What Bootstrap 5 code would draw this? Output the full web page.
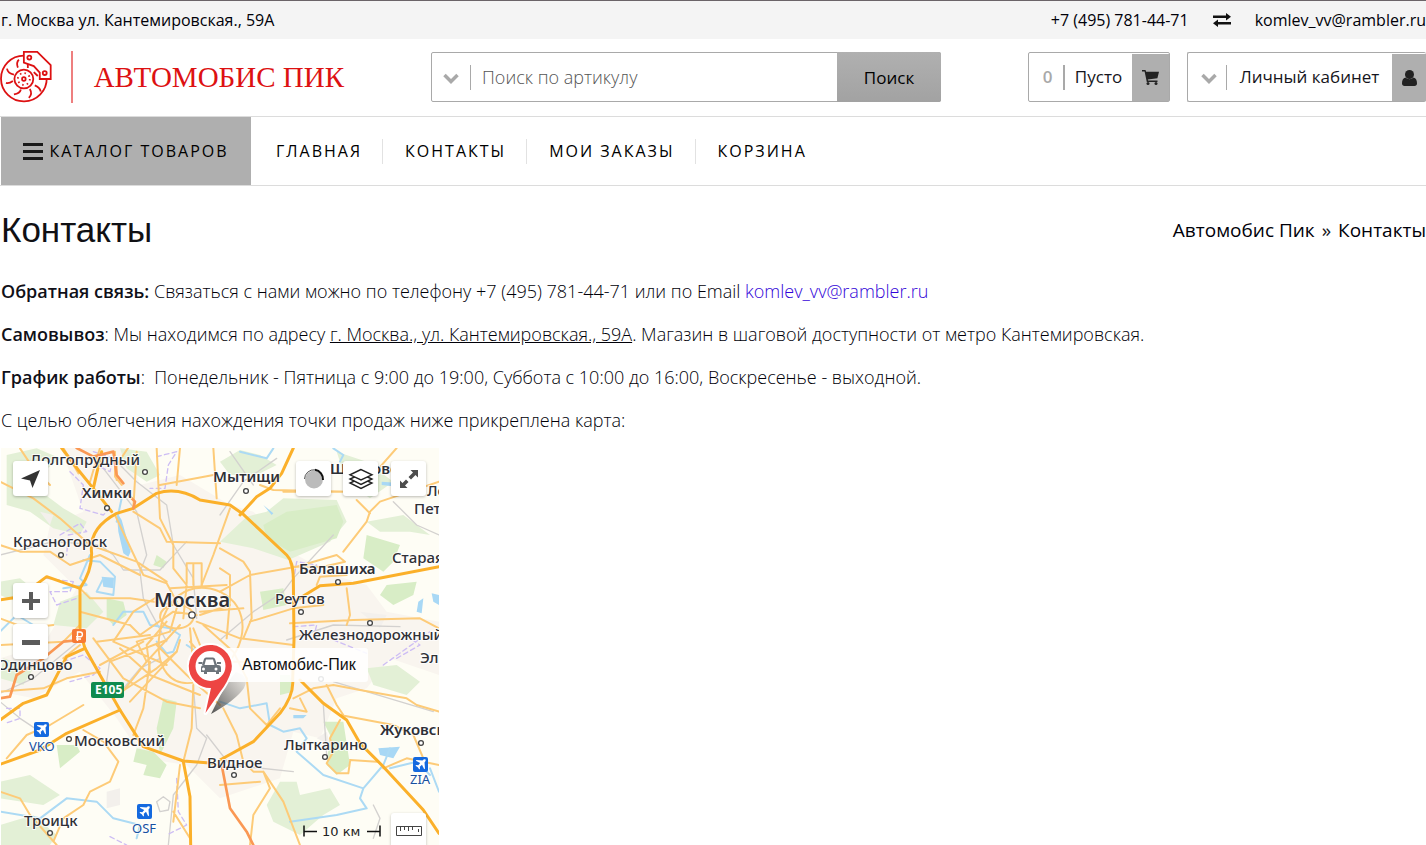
<!DOCTYPE html>
<html lang="ru">
<head>
<meta charset="utf-8">
<meta name="viewport" content="width=device-width, initial-scale=1">
<title>Контакты — Автомобис Пик</title>
<link href="https://cdn.jsdelivr.net/npm/bootstrap@5.3.0/dist/css/bootstrap.min.css" rel="stylesheet">
<style>
body{font-family:"Open Sans","Noto Sans",sans-serif;font-size:18px;line-height:25px;color:#000008;font-weight:300}
a{color:inherit;text-decoration:none}
.topbar{background:#f4f4f4;border-top:1px solid #6b6468;font-size:16px;line-height:38px;font-weight:400;padding-left:1px}
.site-head{min-height:77px;padding-bottom:1px}
.brand{color:#dd1112;font:29px "Liberation Serif",serif;width:344px}
.brand-name{margin-left:21px}
.brand-line{width:2px;height:52px;background:#ee7f7f;margin-left:19px}
.search{flex:0 1 510px;height:50px;border:1px solid #a9a9a9;border-radius:2px}
.search input{border:0;outline:0;min-width:0;font-size:18px;font-weight:300;padding:0 11px;background:none}
.search input::placeholder{color:#555;opacity:1}
.search-go{width:104px;border:0;margin:-1px;border-radius:0 2px 2px 0;background:linear-gradient(#b0b0b0,#a2a2a2);color:#000;font-size:17px}
.arrow{border:0;background:none;padding:0;width:38px}
.rule{width:1px;height:25px;background:#a9a9a9}
.rule2{width:2px}
.box{height:50px;border:1px solid #a9a9a9;border-radius:2px;font-size:17px;line-height:24px;font-weight:400;background:none;padding:0;color:#151520}
.basket{width:142px}
.account{width:239px;border-right:0}
.box-ico{width:37px;background:#afafaf;margin-top:1px}
.account .box-ico{width:34px}
.count{width:34px;color:#a9a9a9;padding-left:3px;font-weight:600}
.menu{border-top:1px solid #dcdcdc;border-bottom:1px solid #dcdcdc;padding-left:1px;height:70px;font-weight:500;font-size:16px;letter-spacing:2px;color:#000}
.catalog{background:#afafaf;border:0;width:250px;font-weight:500;letter-spacing:inherit;color:#000;padding:0}
.catalog svg{margin-right:6px}
.menu-links a{padding:0 20px 0 22px;line-height:25px;border-left:1px solid #e2e2e2}
.menu-links li:first-child a{border:0;padding-left:25px}
.page{padding-left:1px}
.page h1{font:400 35px/42px "Liberation Sans",Arial,sans-serif;color:#101014}
.page b{font-weight:600;color:#101018}
.title-row{padding:23px 0}
.crumbs{font-size:19px;font-weight:400}
.crumbs .breadcrumb-item+.breadcrumb-item::before{content:"»";color:#151520;padding-right:7px}
.crumbs .breadcrumb-item+.breadcrumb-item{padding-left:7px}
.texts{padding-top:5px}
.texts p{margin-bottom:18px}
.texts p:last-child{margin-bottom:15px}
.mail{color:#3204d8}
.map{width:438px;max-width:100%;overflow:hidden}
.map-btn{position:absolute;width:35px;height:35px;border:0;border-radius:3px;background:#fff;box-shadow:0 1px 3px #0004;padding:0;display:flex;align-items:center;justify-content:center}
.hw{stroke:#fbb02a;stroke-width:9}
.rd{stroke:#fdcb78;stroke-width:6}
.rail{stroke:#d3d1cf;stroke-width:4}
.wt{stroke:#acdaf4;stroke-width:6}
.lbl{font-family:"Noto Sans",sans-serif;font-size:15px;font-weight:500;fill:#2f3036;paint-order:stroke;stroke:#fffc;stroke-width:2px}
.bl{font-weight:600}
.city{font-size:20px}
.air{fill:#17509f;font-size:13px;font-weight:400}
</style>
</head>
<body>
<div class="topbar d-flex justify-content-between">
  <span>г. Москва ул. Кантемировская., 59А</span>
  <div class="d-flex align-items-center">
    <a href="tel:+74957814471">+7 (495) 781-44-71</a>
    <a href="#" class="d-flex px-4" aria-label="Сравнение"><svg width="18" height="14" viewBox="0 0 18 14" fill="#111"><path d="M0 2.500h13V0l5 3.800-5 3.700V5H0zM18 9H5V6.500L0 10.200 5 14v-2.500h13z"/></svg></a>
    <a href="mailto:komlev_vv@rambler.ru">komlev_vv@rambler.ru</a>
  </div>
</div>
<header class="site-head d-flex align-items-center justify-content-between">
  <a href="#" class="brand d-flex align-items-center">
    <svg width="52" height="52" viewBox="0 0 52 52" fill="none" stroke="#dd1112" stroke-width="1.800">
      <path d="M24 4.500A23 23 0 1 0 47 27"/><circle cx="24" cy="28" r="9.500"/><circle cx="24" cy="28" r="1.800"/>
      <circle cx="24" cy="28" r="6" stroke-dasharray="1.500 3.200"/>
      <path d="M24 .8h13.500L51 14v14H40V21.500L34 15 24 11.500z"/><circle cx="29.500" cy="6.500" r="2"/><circle cx="45" cy="22" r="2"/>
      <path d="M19 8.500q-3 3-1 8M7 17.500q1 5 7 6M6 32q3 1 7-2M14 43.500q6-1 7-5M29 47q4-4 1-9M41 40.500q-1-4-6-6"/>
      <path d="M28 13v4M34 21l4 4"/>
    </svg>
    <span class="brand-line"></span><span class="brand-name text-nowrap">АВТОМОБИС ПИК</span>
  </a>
  <form class="search d-flex align-items-center">
    <button type="button" class="arrow" aria-label="Тип поиска"><svg width="16" height="11" viewBox="0 0 16 11" fill="none" stroke="#a9a9a9" stroke-width="3.500"><path d="M1.500 2 8 8.500 14.500 2"/></svg></button>
    <span class="rule"></span>
    <input class="flex-grow-1" type="text" placeholder="Поиск по артикулу" aria-label="Поиск по артикулу">
    <button type="submit" class="search-go align-self-stretch">Поиск</button>
  </form>
  <div class="d-flex justify-content-between" style="gap:17px">
    <a href="#" class="box basket d-flex align-items-center">
      <b class="count text-center">0</b><span class="rule rule2"></span><span class="flex-grow-1 text-center">Пусто</span>
      <span class="box-ico align-self-stretch d-flex align-items-center justify-content-center"><svg width="17" height="15" viewBox="0 0 17 15" fill="#222"><path d="M0 0h3.500l.6 1.800H17l-1.600 6.500-9.600 1.100.3 1.200H15.500V12H4.800L2.600 1.500H0z"/><circle cx="6" cy="13.500" r="1.500"/><circle cx="14" cy="13.500" r="1.500"/></svg></span>
    </a>
    <button type="button" class="box account d-flex align-items-center">
      <span class="arrow ps-1"><svg width="16" height="11" viewBox="0 0 16 11" fill="none" stroke="#a9a9a9" stroke-width="3.500"><path d="M1.500 2 8 8.500 14.500 2"/></svg></span>
      <span class="rule"></span><span class="flex-grow-1 text-center text-nowrap">Личный кабинет</span>
      <span class="box-ico align-self-stretch d-flex align-items-center justify-content-center"><svg width="15" height="16" viewBox="0 0 15 16" fill="#222"><circle cx="7.500" cy="4.500" r="4.500"/><path d="M3.500 7.500C1 8 0 10.500 0 13.500 0 15 1 16 2.500 16h10c1.500 0 2.500-1 2.500-2.500 0-3-1-5.500-3.500-6a5.500 5.500 0 0 1-8 0z"/></svg></span>
    </button>
  </div>
</header>
<nav class="menu d-flex">
  <button type="button" class="catalog d-flex align-items-center justify-content-center"><svg width="20" height="17" viewBox="0 0 20 17" fill="#1a1a1a"><path d="M0 0h20v3H0zM0 7h20v3H0zM0 14h20v3H0z"/></svg>КАТАЛОГ ТОВАРОВ</button>
  <ul class="menu-links list-unstyled d-flex align-items-center m-0">
    <li><a class="d-block" href="#">ГЛАВНАЯ</a></li><li><a class="d-block" href="#">КОНТАКТЫ</a></li><li><a class="d-block" href="#">МОИ ЗАКАЗЫ</a></li><li><a class="d-block" href="#">КОРЗИНА</a></li>
  </ul>
</nav>
<main class="page">
  <div class="title-row d-flex justify-content-between align-items-center">
    <h1 class="m-0">Контакты</h1>
    <ol class="crumbs breadcrumb m-0"><li class="breadcrumb-item"><a href="#">Автомобис Пик</a></li><li class="breadcrumb-item">Контакты</li></ol>
  </div>
  <div class="texts">
    <p><b>Обратная связь:</b> Связаться с нами можно по телефону +7 (495) 781-44-71 или по Email <a class="mail" href="mailto:komlev_vv@rambler.ru">komlev_vv@rambler.ru</a></p>
    <p><b>Самовывоз</b>: Мы находимся по адресу <u>г. Москва., ул. Кантемировская., 59А</u>. Магазин в шаговой доступности от метро Кантемировская.</p>
    <p><b>График работы</b>:&nbsp; Понедельник - Пятница с 9:00 до 19:00, Суббота с 10:00 до 16:00, Воскресенье - выходной.</p>
    <p>С целью облегчения нахождения точки продаж ниже прикреплена карта:</p>
  </div>
  <div class="map position-relative">
    <svg class="d-block w-100" viewBox="1 448 438 397">
      <rect x="1" y="448" width="438" height="397" fill="#fefdf5"/>
      <g transform="translate(0 445) scale(.333333)" fill="none" stroke-linejoin="round" stroke-linecap="round">
        <path fill="#f9f5ef" d="M180 0 380 0 420 120 540 90 690 180 760 200 890 330 1000 390 1100 420 1160 500 1317 530V690L1170 640 1100 730 1010 760 960 880 880 860 840 1000 660 1060 560 960 430 940 350 820 240 680 100 760 0 740V640L130 600 230 430 130 330 150 240 250 200z"/>
        <path fill="#e3f0d6" d="M20 30 110 10 180 40 130 80 110 130 190 190 260 230 240 270 160 250 90 200 20 180zM360 10 440 20 480 90 440 110 380 70zM660 50 720 15 780 30 830 60 770 90 690 90zM660 290 740 215 800 200 850 160 1010 165 1040 230 990 290 865 345 760 310zM1010 20 1100 50 1180 110 1110 160 1040 110zM1100 230 1210 210 1290 270 1230 260 1140 260zM0 410 60 400 110 440 50 470 0 450zM180 470 260 440 310 500 260 550 160 540zM10 640 100 670 70 720 0 700zM0 1010 90 990 180 1050 130 1080 0 1060zM0 1140 100 1110 170 1170 150 1200 0 1200zM900 1050 990 1030 1020 1080 970 1110 900 1170 820 1130 800 1080 840 1010 890 1010zM1100 670 1190 660 1260 710 1220 750 1120 720z"/>
        <path fill="#d8edc6" d="M790 240 860 200 1010 180 1030 230 1010 280 870 320 800 280zM1100 270 1200 300 1180 350 1150 380 1090 340zM1160 420 1250 410 1240 450 1180 480 1140 450zM470 330 500 350 490 370 460 360zM320 460 370 470 380 510 340 540 320 520zM780 440 850 430 860 480 790 495zM840 690 870 690 880 740 840 750zM970 830 1030 830 1050 960 1010 990 980 960 990 870zM490 760 530 770 520 850 480 930 470 850zM410 910 460 920 500 960 480 1000 430 990 440 960 400 950zM170 900 230 900 240 920 180 970z"/>
        <path fill="#f3f0ec" d="M60 60 100 50 110 90 70 90zM120 200 160 210 150 240zM70 500 120 480 130 510zM320 1040 360 1030 360 1080 320 1090zM1080 500 1160 510 1140 550zM950 880 980 860 990 900z"/>
        <path fill="#a8d8f5" d="M350 200 365 225 392 320 385 335 370 325 355 260zM305 395 342 398 340 430 310 425zM790 180 820 205 815 210zM1145 110 1210 115 1190 125 1145 120zM1295 445 1317 450V480L1300 470zM1255 470 1270 460 1265 505 1250 500zM880 810 920 810 910 820 880 820zM1135 910 1200 905 1180 940 1140 930z"/>
        <g class="rail">
          <path d="M310 70 410 200 440 330 420 380 430 460 500 590M340 40 410 110 500 180 520 300 580 400 590 520M0 330 160 290 300 300 340 330 370 375 480 375 560 290M660 210 730 110 830 40M660 585 760 500 850 440 880 400 1000 270M1180 170 1250 240 1317 270M860 585 1000 540 1200 545M580 720 590 850 620 880 590 960 520 1050 505 1200M620 870 690 960 880 980M970 780 980 930M1000 710 1100 740 1300 800M0 745 100 700 240 585M0 770 60 820 120 860M330 640 320 710 370 730 420 670 480 640M470 1070 490 1055 510 1070 505 1095 480 1100zM1120 1080 1140 1120 1120 1180M690 20 760 120"/>
        </g>
        <g stroke="#cdbdf4" stroke-width="4" stroke-dasharray="14 10">
          <path d="M280 20 340 40 330 80 290 60M210 80 250 120 240 190 310 210 330 190M180 270 240 235 260 260 205 270 200 330M470 35 530 20 505 60 495 130 450 130M140 400 220 410 210 440 150 440 170 480 230 460M880 410 890 350 950 360 920 380M880 545 950 540 940 580M1190 640 1260 600 1230 580M190 650 250 630 300 670 280 690 210 710M20 790 60 790 60 820 15 835M1000 585 1100 625M530 1000 535 1100 560 1140 500 1170M330 1175 380 1200M1150 660 1290 560"/>
        </g>
        <g class="wt">
          <path d="M365 160 350 230M250 345 300 350 345 395 340 450 290 440 310 400M190 430 260 420 240 400 270 330M340 540 370 500 430 500 450 540 510 550 540 570M540 570 520 620 500 625 470 590M0 560 50 510 100 540M560 600 620 640M660 770 720 790 800 775 810 840 850 860 900 850 920 880 890 920 970 990 1090 1030 1150 960 1170 910M0 1100 120 1120 200 1060 290 1070 340 1120 420 1140 410 1180M1090 1030 1080 1060 1100 1090 1010 1110 870 1130M720 20 800 40 820 10M1000 10 1030 30 1020 50M1170 970 1250 950 1290 990M1290 970 1317 1040" />
        </g>
        <g class="rd">
          <path d="M345 210 430 390 500 415 530 470M0 110 100 160 180 220 270 300 410 350 500 410M60 10 100 70 150 120M190 9 235 85M300 9 270 110M410 20 400 190M345 20 345 95 365 120M470 9 480 220 520 300 520 370 560 420 550 520M640 9 650 160M690 190 640 330 605 420M500 290 660 295M480 120 640 90M400 200 480 250 500 290M0 300 60 320 150 320 210 360 300 330 420 390M240 430 270 460 390 460 530 480M240 500 390 540 420 570 520 500 590 510M0 520 80 550 160 540M540 9 530 120M0 600 190 590 240 540M480 450 400 500 340 590 500 660M500 530 440 600 450 680M510 430 680 420M530 490 510 560 410 590 440 650 360 750"/>
          <path d="M660 310 730 350 750 380 755 520 730 580M660 370 690 390 690 460 680 580M660 440 750 390 890 365 1010 330 1035 350 970 365 880 365M1190 9 1110 100 1050 140 820 135 780 120M870 350 880 390M1030 320 1100 230 1110 200 1140 170 1317 110M1070 165 1110 205M750 530 880 490 970 480M870 535 1060 525 1260 520 1317 550M1040 430 1050 510 1040 540M950 420 960 395 1040 390M850 140 1060 140 1100 110"/>
          <path d="M580 510A50 36 0 1 0 540 550 50 36 0 0 0 580 510M480 560C500 420 620 400 690 460S730 650 620 700 460 660 480 560M540 540 440 650M580 550 640 700M590 530 720 580 880 600M600 510 690 480M570 550 580 660M530 620 390 770M570 590 620 650 750 650M470 600 560 690 660 780M560 415 560 355 605 355 605 420M580 355V420M600 500 730 490M610 540 700 620 740 700M290 590 450 570M300 660 430 590"/>
          <path d="M390 0 350 60 350 105M190 640 240 600M0 740 130 730 200 700 300 680M360 610 450 690 600 750M280 580 370 700 500 770 600 790M350 750 470 670 530 620 540 585M580 720 575 850 550 950M450 650 430 790 400 870M330 650 500 585M740 700 750 790 800 840 840 790M670 790 710 870 730 950 760 980 790 980 810 1030 760 1110 750 1200M880 760 940 730 1000 720 1080 735 1220 760 1250 780 1317 800M980 720 1010 780 1030 810M900 760 920 800 870 790M1020 825 990 880 1000 920 980 955 1010 985 1045 985 1050 950M1020 810 1180 840 1240 870 1270 940M1130 950 1050 945M1150 970 1220 940 1317 960M660 1020 780 1010M790 980 850 1070 900 1200M0 1040 60 1060 90 1110 170 1200M20 940 80 870 150 840 250 780M250 855 310 890 355 950 330 1010 270 1040 250 1080 190 1120 160 1190M520 1100 570 1180M540 960 520 1130"/>
        </g>
        <g class="hw">
          <path d="M640 955 550 948 430 905 360 795 300 690 255 610 240 560V430Q275 380 275 325 265 250 350 205L400 190 470 145Q535 125 600 165L690 180 730 208 860 330Q880 350 880 400L882 585 878 705Q882 750 840 805L760 890 660 945"/>
          <path d="M185 9 235 75 280 130 335 200M280 130 305 20M880 9 845 85 810 130 770 155 720 210M882 470 960 422 1060 415 1317 365M900 705 970 775 1040 825 1080 895 1150 965 1270 1095 1317 1165M550 950 570 1055 572 1200M0 958 120 915 200 865 360 795M0 825 70 775 140 750 200 635 255 610M0 465 60 455 140 395 240 430"/>
        </g>
        <path stroke="#fa9854" stroke-width="8" d="M230 9 280 35 340 20 350 90 370 115M665 960 690 1090 740 1160 760 1200M0 760 30 755 50 690 130 640 190 590 240 585M375 140 405 170 400 190"/>
      </g>
      <g fill="#fff" stroke="#444" stroke-width="1.300"><circle cx="145" cy="472" r="2.400"/><circle cx="107" cy="508" r="2.400"/><circle cx="246" cy="491" r="2.400"/><circle cx="61" cy="555" r="2.400"/><circle cx="338" cy="582" r="2.400"/><circle cx="301" cy="612" r="2.400"/><circle cx="370" cy="623" r="2.400"/><circle cx="192" cy="615" r="3.200"/><circle cx="31" cy="677" r="2.400"/><circle cx="69" cy="739" r="2.400"/><circle cx="234" cy="775" r="2.400"/><circle cx="325" cy="757" r="2.400"/><circle cx="421" cy="743" r="2.400"/><circle cx="50" cy="833" r="2.400"/><circle cx="321" cy="679" r="2.400"/></g>
      <g class="lbl">
        <text x="30" y="465">Долгопрудный</text><text class="bl" x="82" y="498">Химки</text><text class="bl" x="213" y="482">Мытищи</text><text class="bl" x="330" y="474">Щёлково</text>
        <text x="427" y="496">Ло</text><text x="414" y="514">Пет</text><text x="13" y="547">Красногорск</text><text x="392" y="563">Старая</text><text class="bl" x="299" y="574">Балашиха</text><text x="275" y="604">Реутов</text>
        <text class="bl city" x="154" y="607">Москва</text><text x="299" y="640">Железнодорожный</text><text x="-3" y="670">Одинцово</text><text x="420" y="663">Эл</text><text x="74" y="746">Московский</text><text x="207" y="768">Видное</text><text x="284" y="750">Лыткарино</text><text class="bl" x="380" y="735">Жуковск</text><text x="24" y="826">Троицк</text>
        <text class="air" x="29" y="751">VKO</text><text class="air" x="132" y="833">OSF</text><text class="air" x="410" y="784">ZIA</text>
      </g>
      <rect x="91" y="682" width="33" height="16" rx="2" fill="#0f8b4e"/><text x="95" y="694" fill="#fff" font-family="Noto Sans" font-weight="700" font-size="12">E105</text>
      <rect x="72" y="629" width="14" height="14" rx="2" fill="#f77a34"/><path d="M77.500 641v-9H80a2.400 2.400 0 0 1 0 4.800h-4M76 639h5" stroke="#fff" stroke-width="1.400" fill="none"/>
      <defs><g id="plane"><rect width="15" height="15" rx="2" fill="#1469df"/><path fill="#fff" d="M12.500 2.500c-1-.6-2 0-3 1L3.500 3l-.7.800L7.200 6 5.300 8.200 3.200 8l-.7.700 2.300 1.500 1.500 2.300.7-.7-.2-2.100L9 7.800l2.200 4.400.8-.7-.5-6c1-1 1.600-2 1-3z"/></g>
      <linearGradient id="shade" x1="0" y1="1" x2="1" y2="0"><stop offset="0" stop-color="#333" stop-opacity=".85"/><stop offset="1" stop-color="#777" stop-opacity=".1"/></linearGradient></defs>
      <use href="#plane" x="34" y="722"/><use href="#plane" x="137" y="804"/><use href="#plane" x="413" y="757"/>
      <path d="M211 714 226 684 236 672Q250 676 244 688 236 700 211 714z" fill="url(#shade)"/>
      <rect x="225" y="648" width="143" height="34" rx="3" fill="#fff" opacity=".88"/>
      <path d="M205.500 713 211 688A21.500 21.500 0 1 1 231.500 670Q228 682 220 692z" fill="#ed4543" stroke="#fff" stroke-width="4" stroke-linejoin="round" paint-order="stroke"/><circle cx="210.500" cy="666" r="15" fill="#fff"/>
      <path d="M202 665l2-6q.5-1.500 2-1.500h7q1.500 0 2 1.500l2 6h1q3 0 3 3v4h-2v2h-3v-2h-9v2h-3v-2h-3v-4q0-3 3-3zm2.500 0h10l-1.500-5.500h-7z" fill="#6c747b" fill-rule="evenodd"/><path d="M198.500 663h4M217 663h4" stroke="#6c747b" stroke-width="2"/><circle cx="203.500" cy="669" r="1.500" fill="#fff"/><circle cx="216" cy="669" r="1.500" fill="#fff"/>
      <text x="242" y="670" font-family="Liberation Sans" font-size="16" font-weight="400" fill="#111">Автомобис-Пик</text>
      <path d="M304 825.500v11M304 831.500h13M380 825.500v11M380 831.500h-13" stroke="#111" stroke-width="1.500"/>
      <text x="322" y="836" font-family="DejaVu Sans" font-size="13" font-weight="400" fill="#222">10 км</text>
    </svg>
    <button type="button" class="map-btn" style="left:12px;top:13px" aria-label="Моё местоположение"><svg width="22" height="22" viewBox="0 0 22 22"><path d="M20 2 1 10.500l9 2L12.500 20z" fill="#333"/></svg></button>
    <button type="button" class="map-btn" style="left:295px;top:13px" aria-label="Пробки"><svg width="22" height="22" viewBox="0 0 22 22"><circle cx="11" cy="11.500" r="9" fill="#bbb"/><path d="M12 1.800A9.500 9.500 0 0 1 20 12" fill="none" stroke="#111" stroke-width="2"/><path d="M1.500 11A9.500 9.500 0 0 1 12 1.800" fill="none" stroke="#555"/></svg></button>
    <button type="button" class="map-btn" style="left:342px;top:13px" aria-label="Слои"><svg width="26" height="22" viewBox="0 0 26 22" fill="#fff" stroke="#222" stroke-width="1.400"><path d="M13 10 2 15l11 5.500L24 15z"/><path d="M13 6 2 11l11 5.500L24 11z"/><path d="M13 1.500 2 6.800 13 12l11-5.200z"/></svg></button>
    <button type="button" class="map-btn" style="left:390px;top:13px" aria-label="На весь экран"><svg width="20" height="20" viewBox="0 0 20 20" fill="#4d4d4d"><path d="M11.500 1H19v7.500L16.500 6l-4.500 4.500L9.500 8 14 3.500zM8.500 19H1v-7.500L3.500 14 7 10.500 9.500 13 6 16.500z"/></svg></button>
    <button type="button" class="map-btn" style="left:12px;top:135px" aria-label="Приблизить"><svg width="18" height="18"><path d="M0 7h7V0h4v7h7v4h-7v7H7v-7H0z" fill="#5b5b5b"/></svg></button>
    <button type="button" class="map-btn" style="left:12px;top:176px" aria-label="Отдалить"><svg width="18" height="18"><path d="M0 7h18v5H0z" fill="#5b5b5b"/></svg></button>
    <button type="button" class="map-btn" style="left:390px;top:365px" aria-label="Линейка"><svg width="26" height="10" fill="none" stroke="#444"><path d="M.500.500h25v9H.500zM4.500 1v4M8.500 1v3M12.500 1v4M16.500 1v3M22.500 3v3"/></svg></button>
  </div>
</main>
<script src="https://cdn.jsdelivr.net/npm/bootstrap@5.3.0/dist/js/bootstrap.bundle.min.js"></script>
</body>
</html>
